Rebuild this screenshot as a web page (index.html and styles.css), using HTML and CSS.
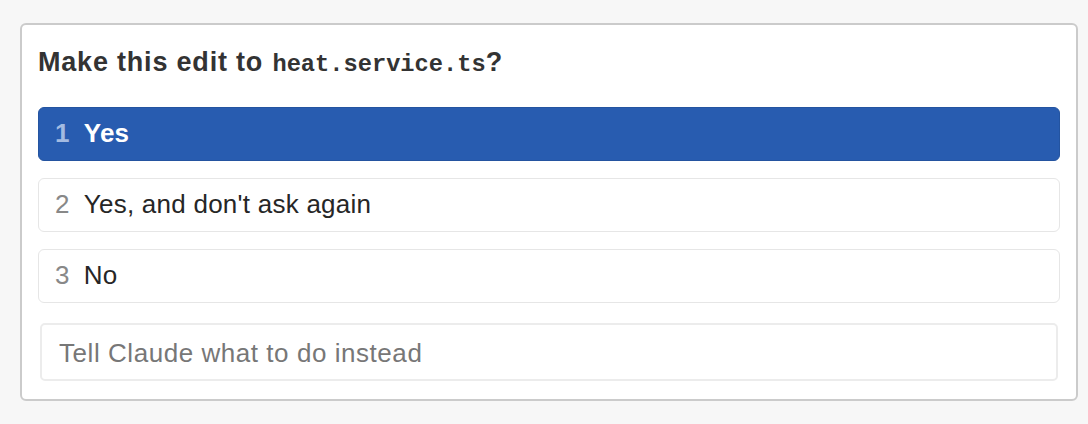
FILE: index.html
```html
<!DOCTYPE html>
<html>
<head>
<meta charset="utf-8">
<link rel="stylesheet" href="styles.css">
</head>
<body>
<div class="card">
  <h1 class="title">Make this edit to <code class="file">heat.service.ts</code>?</h1>
  <div class="options">
    <div class="option selected"><span class="num">1</span><span class="label">Yes</span></div>
    <div class="option"><span class="num">2</span><span class="label">Yes, and don't ask again</span></div>
    <div class="option"><span class="num">3</span><span class="label">No</span></div>
  </div>
  <input class="instead" type="text" placeholder="Tell Claude what to do instead">
</div>
</body>
</html>
```
FILE: styles.css
```css
html, body {
  margin: 0;
  padding: 0;
  background: #f7f7f7;
}
body {
  padding: 23px 10px 0 20px;
  font-family: "Liberation Sans", Arial, sans-serif;
}
.card {
  box-sizing: border-box;
  width: 1058px;
  background: #fff;
  border: 2px solid #cbcbcb;
  border-radius: 6px;
  padding: 21px 16px 18px 16px;
}
.title {
  margin: 0 0 26px 0;
  font-size: 27px;
  line-height: 32px;
  font-weight: bold;
  letter-spacing: 0.8px;
  color: #333;
}
.file {
  font-family: "Liberation Mono", "DejaVu Sans Mono", monospace;
  font-weight: bold;
  font-size: 23.7px;
  letter-spacing: 0;
  margin-left: 1px;
  color: #333;
}
.options {
  display: flex;
  flex-direction: column;
  gap: 17px;
}
.option {
  box-sizing: border-box;
  height: 54px;
  display: flex;
  align-items: center;
  padding: 0 0 1px 16px;
  border: 1px solid #e6e6e6;
  border-radius: 6px;
  font-size: 26px;
  letter-spacing: 0.25px;
  color: #262626;
}
.option.selected {
  background: #285cb0;
  border-color: #2454a0;
  color: #fff;
  font-weight: bold;
}
.num {
  color: #888;
  margin-right: 14px;
}
.option.selected .num {
  color: #a3bbe2;
}
.instead {
  display: block;
  box-sizing: border-box;
  width: calc(100% - 4px);
  height: 58px;
  margin: 20px 2px 0 2px;
  padding: 2px 17px 0 17px;
  border: 2px solid #ececec;
  border-radius: 5px;
  font-family: "Liberation Sans", Arial, sans-serif;
  font-size: 26px;
  letter-spacing: 0.55px;
  color: #333;
  background: #fff;
  outline: none;
}
.instead::placeholder {
  color: #777;
}
```
